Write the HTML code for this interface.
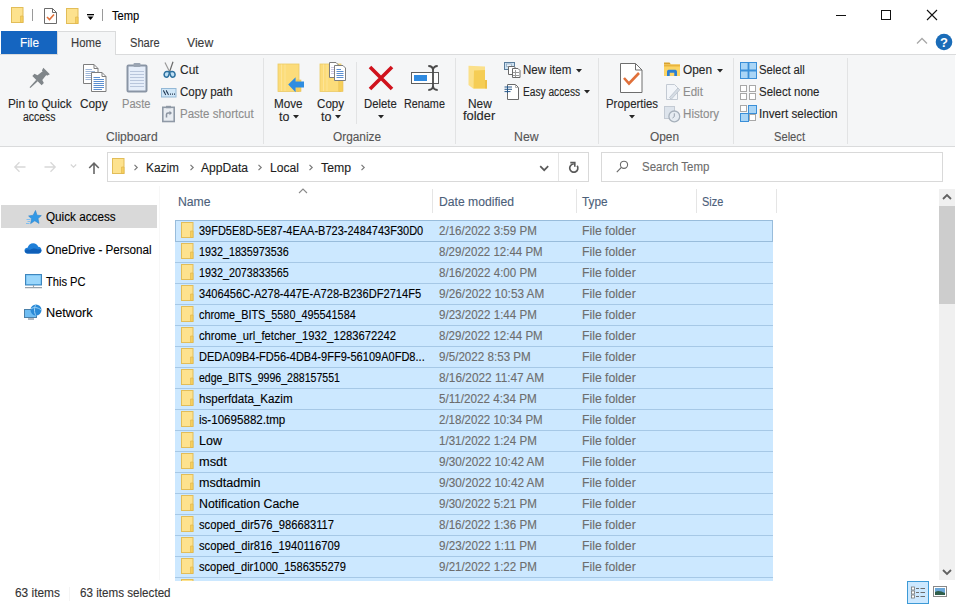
<!DOCTYPE html><html><head><meta charset="utf-8"><style>
*{margin:0;padding:0;box-sizing:border-box}
html,body{width:956px;height:605px;overflow:hidden;background:#fff;font-family:"Liberation Sans", sans-serif;}
.t{position:absolute;white-space:nowrap;line-height:normal;-webkit-text-stroke:0.12px currentColor;}
.a{position:absolute}
</style></head><body>
<svg style="position:absolute;left:11px;top:7px" width="14" height="17" viewBox="0 0 14 17"><rect x="0.5" y="0.5" width="11.5" height="15" fill="#fde28e" stroke="#e2bd58"/><path d="M9.6 9 H12 V15.5 H9.6 Z" fill="#f8d360" stroke="#dfb44c" stroke-width="0.7"/></svg>
<div class="a" style="left:32px;top:9px;width:1px;height:12px;background:#9a9a9a"></div>
<svg class="a" style="left:44px;top:8px" width="13" height="16" viewBox="0 0 13 16"><path d="M0.5 0.5 H8.5 L12.5 4.5 V15.5 H0.5 Z" fill="#fff" stroke="#6b6b6b"/><path d="M8.5 0.5 V4.5 H12.5" fill="none" stroke="#6b6b6b"/><path d="M3 9 L5.5 11.5 L10 6.5" fill="none" stroke="#e0703a" stroke-width="1.6"/></svg>
<svg style="position:absolute;left:66px;top:8px" width="14" height="17" viewBox="0 0 14 17"><rect x="0.5" y="0.5" width="11.5" height="15" fill="#fde28e" stroke="#e2bd58"/><path d="M9.6 9 H12 V15.5 H9.6 Z" fill="#f8d360" stroke="#dfb44c" stroke-width="0.7"/></svg>
<svg class="a" style="left:86px;top:13px" width="9" height="8" viewBox="0 0 9 8"><rect x="1" y="1" width="7" height="1.3" fill="#000"/><path d="M1.5 3.5 H7.5 L4.5 7 Z" fill="#000"/></svg>
<div class="a" style="left:102px;top:9px;width:1px;height:12px;background:#9a9a9a"></div>
<div class="a" style="left:836px;top:15px;width:10px;height:1px;background:#111"></div>
<div class="a" style="left:881px;top:10px;width:10px;height:10px;border:1px solid #111"></div>
<svg class="a" style="left:926px;top:9px" width="12" height="12" viewBox="0 0 12 12"><path d="M1 1 L11 11 M11 1 L1 11" stroke="#111" stroke-width="1.1"/></svg>
<div class="a" style="left:1px;top:31px;width:56px;height:23px;background:#1565c0"></div>
<div class="a" style="left:0;top:54px;width:956px;height:1px;background:#dadbdc"></div>
<div class="a" style="left:57px;top:31px;width:59px;height:24px;background:#f5f6f7;border:1px solid #dadbdc;border-bottom:none"></div>
<div class="a" style="left:0;top:55px;width:955px;height:91px;background:#f5f6f7"></div>
<div class="a" style="left:0;top:146px;width:955px;height:1px;background:#dadbdc"></div>
<div class="a" style="left:263px;top:58px;width:1px;height:86px;background:#e2e3e4"></div>
<div class="a" style="left:455px;top:58px;width:1px;height:86px;background:#e2e3e4"></div>
<div class="a" style="left:598px;top:58px;width:1px;height:86px;background:#e2e3e4"></div>
<div class="a" style="left:733px;top:58px;width:1px;height:86px;background:#e2e3e4"></div>
<div class="a" style="left:847px;top:58px;width:1px;height:86px;background:#e2e3e4"></div>
<div class="a" style="left:356px;top:62px;width:1px;height:62px;background:#e2e3e4"></div>
<svg class="a" style="left:915px;top:36px" width="14" height="10" viewBox="0 0 14 10"><path d="M2 7.5 L7 2.5 L12 7.5" fill="none" stroke="#a8a8a8" stroke-width="1.3"/></svg>
<svg class="a" style="left:935px;top:33px" width="18" height="18" viewBox="0 0 18 18"><circle cx="9" cy="9" r="8.3" fill="#1a6cb8"/><text x="9" y="14" text-anchor="middle" font-family="Liberation Sans" font-weight="bold" font-size="13" fill="#fff">?</text></svg>
<svg class="a" style="left:28px;top:66px" width="24" height="24" viewBox="0 0 24 24"><g transform="translate(18.6,5) rotate(45)" fill="#80868a"><path d="M-4.6 0 H4.6 L3.6 3 H2.6 L3.4 9.5 L6.6 10.5 V13.6 H-6.6 V10.5 L-3.4 9.5 L-2.6 3 H-3.6 Z"/><path d="M-1 13.5 H1 L0.6 23.5 H-0.6 Z"/></g></svg>
<svg class="a" style="left:83px;top:64px" width="25" height="29" viewBox="0 0 25 29"><path d="M0.5 0.5 H11 L15 4.5 V19.5 H0.5 Z" fill="#fff" stroke="#7e7e7e"/><path d="M11 0.5 V4.5 H15" fill="none" stroke="#7e7e7e"/><g stroke="#9fb7d8"><path d="M2.5 5.5 H9 M2.5 7.5 H12 M2.5 9.5 H12 M2.5 11.5 H12 M2.5 13.5 H12 M2.5 15.5 H10"/></g><path d="M8.5 8.5 H19 L23 12.5 V27.5 H8.5 Z" fill="#fff" stroke="#7e7e7e"/><path d="M19 8.5 V12.5 H23" fill="none" stroke="#7e7e7e"/><g stroke="#5b8fd0" stroke-width="1"><path d="M10.5 13.5 H17 M10.5 15.5 H21 M10.5 17.5 H21 M10.5 19.5 H21 M10.5 21.5 H21 M10.5 23.5 H21 M10.5 25.5 H19"/></g></svg>
<svg class="a" style="left:126px;top:62px" width="22" height="31" viewBox="0 0 22 31"><rect x="1.5" y="3.5" width="19" height="26" rx="1" fill="#e6eefa" stroke="#8a95a5" stroke-width="2"/><rect x="7.5" y="1" width="7" height="4" rx="1" fill="#9aa4b2"/><g stroke="#b9c6dc"><path d="M4 9.5 H18 M4 12.5 H18 M4 15.5 H18 M4 18.5 H18 M4 21.5 H18 M4 24.5 H18"/></g></svg>
<svg class="a" style="left:162px;top:60px" width="15" height="19" viewBox="0 0 15 19"><path d="M3 2.5 L7.6 11.8" stroke="#9a9a9a" stroke-width="1.2"/><path d="M11 1.8 L7.6 11.8" stroke="#6a6a6a" stroke-width="1.2"/><path d="M7.5 12.3 C6 11 3.5 11 2.5 13 C1.5 15 2.5 17.2 4.5 17.2 C6 17.2 7 15.5 7.5 12.3 Z" fill="#bfe0f5" stroke="#2b6f9e" stroke-width="1.5"/><path d="M7.7 12.3 C9.2 11 11.7 11 12.7 13 C13.7 15 12.7 17.2 10.7 17.2 C9.2 17.2 8.2 15.5 7.7 12.3 Z" fill="#bfe0f5" stroke="#2b6f9e" stroke-width="1.5"/></svg>
<svg class="a" style="left:161px;top:88px" width="16" height="10" viewBox="0 0 16 10"><rect x="0.5" y="0.5" width="14.5" height="8.5" fill="#cfe6f7" stroke="#93b8d6"/><path d="M2.2 2.5 C3 3 3 4 3.5 4.5 C4 5 4 6 4.8 6.8 M5 2.5 C5.8 3 5.8 4 6.3 4.5 C6.8 5 6.8 6 7.6 6.8" fill="none" stroke="#1f3550" stroke-width="1.1"/><path d="M9 6.2 H10 M11 6.2 H12 M13 6.2 H14" stroke="#1f3550" stroke-width="1.2"/></svg>
<svg class="a" style="left:161px;top:105px" width="15" height="18" viewBox="0 0 15 18"><rect x="1.8" y="2.3" width="11.4" height="14.2" fill="#e9edf2" stroke="#8f99a6" stroke-width="1.6"/><rect x="5" y="0.8" width="5" height="2.4" fill="#8f99a6"/><path d="M5.5 12.5 V9.5 C5.5 8.5 6.2 8 7.2 8 H9.5" fill="none" stroke="#8a93a0" stroke-width="1.5"/><path d="M8.5 5.8 L11 8 L8.5 10.2 Z" fill="#8a93a0"/></svg>
<svg class="a" style="left:277px;top:63px" width="28" height="31" viewBox="0 0 28 31"><rect x="1" y="1" width="21" height="27.5" fill="#fcdc7a" stroke="#ecca66" stroke-width="0.8"/><path d="M4.5 1.5 V28 M8 1.5 V28" stroke="#fde69e" stroke-width="0.8"/><rect x="19.8" y="17" width="4.2" height="11.5" fill="#f6cf5a" stroke="#e9c058" stroke-width="0.6"/><path d="M11.2 21.5 L18.6 14.2 V18.6 H27 V24.6 H18.6 V29.2 Z" fill="#2f8de0"/></svg>
<svg class="a" style="left:319px;top:61px" width="28" height="33" viewBox="0 0 28 33"><rect x="1" y="3" width="21" height="27.5" fill="#fcdc7a" stroke="#ecca66" stroke-width="0.8"/><path d="M4.5 3.5 V30 M8 3.5 V30" stroke="#fde69e" stroke-width="0.8"/><rect x="19.8" y="19" width="4.2" height="11.5" fill="#f6cf5a" stroke="#e9c058" stroke-width="0.6"/><path d="M10.5 1.5 H17 L19.5 4 V16.5 H10.5 Z" fill="#fff" stroke="#7e7e7e"/><path d="M12 6.5 H17 M12 8.5 H18 M12 10.5 H18 M12 12.5 H18" stroke="#b7b0d8" stroke-width="0.7"/><path d="M15.5 4.5 H24 L26.5 7 V19.5 H15.5 Z" fill="#fff" stroke="#7e7e7e"/><g stroke="#5b8fd0"><path d="M17.5 8.5 H22 M17.5 10.5 H24.5 M17.5 12.5 H24.5 M17.5 14.5 H24.5 M17.5 16.5 H24.5"/></g></svg>
<svg class="a" style="left:367px;top:64px" width="28" height="28" viewBox="0 0 28 28"><path d="M3 3 L25 25 M25 3 L3 25" stroke="#d0121d" stroke-width="3.6"/></svg>
<svg class="a" style="left:410px;top:64px" width="30" height="28" viewBox="0 0 30 28"><rect x="1.5" y="8.5" width="27" height="11" fill="#fff" stroke="#5e5e5e"/><rect x="4" y="11" width="13" height="6" fill="#2f8ae0"/><path d="M18.3 2 C21 2 23 3 23 6.5 C23 3 25 2 27.7 2 M23 6.5 V21.5 M18.3 26 C21 26 23 25 23 21.5 C23 25 25 26 27.7 26" fill="none" stroke="#4a4a4a" stroke-width="1.8"/></svg>
<svg class="a" style="left:462px;top:60px" width="28" height="32" viewBox="0 0 28 32"><path d="M6.5 5.7 L23 6.5 V20 H25 V28.6 H11 L6.5 25 Z" fill="#fbe08a"/><path d="M12 10.5 L23 10 V28.6 H11.5 Z" fill="#f5cd55"/><rect x="23" y="20" width="2" height="8.6" fill="#eec047"/></svg>
<svg class="a" style="left:503px;top:61px" width="18" height="18" viewBox="0 0 18 18"><rect x="1.5" y="1.5" width="10" height="7" fill="#cfe3f2" stroke="#5a7d9c"/><rect x="3.5" y="3" width="5" height="2.5" fill="#eef5fb" stroke="#7a98b4" stroke-width="0.6"/><path d="M5.5 5.5 H11 L13 7.5 V13.5 H5.5 Z" fill="#fff" stroke="#6a6a6a"/><path d="M9.5 7.5 H15 L17 9.5 V16.5 H9.5 Z" fill="#fff" stroke="#6a6a6a"/><path d="M10 11.5 H16 M10 14.5 H16 M12.5 9 V16" stroke="#9a9a9a" stroke-width="1"/></svg>
<svg class="a" style="left:503px;top:83px" width="17" height="17" viewBox="0 0 17 17"><path d="M4.5 1.5 H12.5 L15.5 4.5 V16.5 H4.5 Z" fill="#fff" stroke="#6a6a6a"/><path d="M12.5 1.5 V4.5 H15.5" fill="none" stroke="#9a9a9a" stroke-width="0.8"/><path d="M1.5 4 H9 M1.5 6.3 H9 M1.5 8.6 H7.5 M4.5 3 V10" stroke="#2a5a8a" stroke-width="1"/></svg>
<svg class="a" style="left:620px;top:63px" width="23" height="30" viewBox="0 0 23 30"><path d="M0.5 0.5 H15.5 L22 7 V29.5 H0.5 Z" fill="#fff" stroke="#6e6e6e"/><path d="M15.5 0.5 V7 H22" fill="none" stroke="#6e6e6e"/><path d="M4 15 L9 20.5 L19 10" fill="none" stroke="#e0703a" stroke-width="2.6"/></svg>
<svg class="a" style="left:663px;top:62px" width="18" height="15" viewBox="0 0 18 15"><path d="M1 0.5 H6.5 L8 2.5 H1 Z" fill="#d9a22c"/><rect x="1" y="2.5" width="16" height="11.5" fill="#fcd463"/><rect x="1" y="2.5" width="16" height="2" fill="#e9b43e"/><path d="M4 14 V9.8 C4 8.3 5 7.8 6.5 7.8 H11.5 C13 7.8 14 8.3 14 9.8 V14 H11.3 V10.8 H6.7 V14 Z" fill="#2d7fd2"/></svg>
<svg class="a" style="left:665px;top:83px" width="16" height="18" viewBox="0 0 16 18"><path d="M1.5 1.5 H9.5 L12.5 4.5 V16.5 H1.5 Z" fill="#f2f5f9" stroke="#c3cad3"/><path d="M4.5 14.5 L13 5 L14.8 6.8 L6.3 16.3 Z" fill="#d5dce4" stroke="#b9c2cc" stroke-width="0.8"/></svg>
<svg class="a" style="left:663px;top:105px" width="18" height="18" viewBox="0 0 18 18"><rect x="1.5" y="1.5" width="10" height="12" fill="#dde4ec" stroke="#c3cad3"/><circle cx="11.3" cy="11.4" r="5.4" fill="#e6ecf2" stroke="#a6b0bb" stroke-width="1.3"/><path d="M11.3 8.3 V11.6 L9.5 13" stroke="#98a2ad" stroke-width="1" fill="none"/></svg>
<svg class="a" style="left:740px;top:62px" width="17" height="17" viewBox="0 0 17 17"><rect x="0.5" y="0.5" width="16" height="16" fill="#a9d5f6" stroke="#3a8fd8"/><path d="M8.5 0.5 V16.5 M0.5 8.5 H16.5" stroke="#3a8fd8" stroke-width="1.8"/></svg>
<svg class="a" style="left:740px;top:85px" width="17" height="16" viewBox="0 0 17 16"><g fill="#fff" stroke="#a8a8a8"><rect x="0.5" y="0.5" width="6" height="6"/><rect x="9.5" y="0.5" width="6" height="6"/><rect x="0.5" y="8.5" width="6" height="6"/><rect x="9.5" y="8.5" width="6" height="6"/></g></svg>
<svg class="a" style="left:740px;top:105px" width="17" height="17" viewBox="0 0 17 17"><g fill="#fff" stroke="#a8a8a8"><rect x="0.5" y="0.5" width="6" height="6"/><rect x="9.5" y="9.5" width="6" height="6"/></g><g fill="#a9d5f6" stroke="#3a8fd8"><rect x="8.5" y="0.5" width="8" height="8"/><rect x="0.5" y="8.5" width="8" height="8"/></g></svg>
<svg class="a" style="left:292.5px;top:115px" width="6" height="4" viewBox="0 0 6 4"><path d="M0 0 H6 L3 3.6 Z" fill="#262626"/></svg>
<svg class="a" style="left:335px;top:115px" width="6" height="4" viewBox="0 0 6 4"><path d="M0 0 H6 L3 3.6 Z" fill="#262626"/></svg>
<svg class="a" style="left:377.8px;top:115px" width="6" height="4" viewBox="0 0 6 4"><path d="M0 0 H6 L3 3.6 Z" fill="#262626"/></svg>
<svg class="a" style="left:575.5px;top:68.5px" width="6" height="4" viewBox="0 0 6 4"><path d="M0 0 H6 L3 3.6 Z" fill="#262626"/></svg>
<svg class="a" style="left:583.8px;top:89.5px" width="6" height="4" viewBox="0 0 6 4"><path d="M0 0 H6 L3 3.6 Z" fill="#262626"/></svg>
<svg class="a" style="left:628.8px;top:114.8px" width="6" height="4" viewBox="0 0 6 4"><path d="M0 0 H6 L3 3.6 Z" fill="#262626"/></svg>
<svg class="a" style="left:716.8px;top:68.5px" width="6" height="4" viewBox="0 0 6 4"><path d="M0 0 H6 L3 3.6 Z" fill="#262626"/></svg>
<div class="a" style="left:107px;top:152px;width:482px;height:30px;border:1px solid #d9d9d9;background:#fff"></div>
<div class="a" style="left:558px;top:153px;width:1px;height:28px;background:#e5e5e5"></div>
<div class="a" style="left:601px;top:152px;width:342px;height:30px;border:1px solid #d9d9d9;background:#fff"></div>
<svg style="position:absolute;left:112px;top:158px" width="14" height="17" viewBox="0 0 14 17"><rect x="0.5" y="0.5" width="11.5" height="15" fill="#fde28e" stroke="#e2bd58"/><path d="M9.6 9 H12 V15.5 H9.6 Z" fill="#f8d360" stroke="#dfb44c" stroke-width="0.7"/></svg>
<svg class="a" style="left:133px;top:163px" width="6" height="9" viewBox="0 0 6 9"><path d="M1.5 1.8 L4.2 4.5 L1.5 7.2" fill="none" stroke="#7a7a7a" stroke-width="1.2"/></svg>
<svg class="a" style="left:189px;top:163px" width="6" height="9" viewBox="0 0 6 9"><path d="M1.5 1.8 L4.2 4.5 L1.5 7.2" fill="none" stroke="#7a7a7a" stroke-width="1.2"/></svg>
<svg class="a" style="left:257px;top:163px" width="6" height="9" viewBox="0 0 6 9"><path d="M1.5 1.8 L4.2 4.5 L1.5 7.2" fill="none" stroke="#7a7a7a" stroke-width="1.2"/></svg>
<svg class="a" style="left:308px;top:163px" width="6" height="9" viewBox="0 0 6 9"><path d="M1.5 1.8 L4.2 4.5 L1.5 7.2" fill="none" stroke="#7a7a7a" stroke-width="1.2"/></svg>
<svg class="a" style="left:360px;top:163px" width="6" height="9" viewBox="0 0 6 9"><path d="M1.5 1.8 L4.2 4.5 L1.5 7.2" fill="none" stroke="#7a7a7a" stroke-width="1.2"/></svg>
<svg class="a" style="left:539px;top:165px" width="11" height="7" viewBox="0 0 11 7"><path d="M1.2 1.2 L5.2 5.2 L9.2 1.2" fill="none" stroke="#5a5a5a" stroke-width="1.7"/></svg>
<svg class="a" style="left:566px;top:159px" width="16" height="15" viewBox="0 0 16 15"><path d="M7.8 5 A4.1 4.1 0 1 0 11.16 6.75" fill="none" stroke="#5a5a5a" stroke-width="1.7"/><path d="M4.3 3.6 H8.8 V7.8" fill="none" stroke="#5a5a5a" stroke-width="1.6"/></svg>
<svg class="a" style="left:614px;top:158px" width="15" height="16" viewBox="0 0 15 16"><circle cx="10" cy="6.8" r="3.6" fill="none" stroke="#6a6a6a" stroke-width="1.1"/><path d="M7.4 9.4 L2.8 14.2" stroke="#6a6a6a" stroke-width="1.2"/></svg>
<svg class="a" style="left:13px;top:161px" width="14" height="12" viewBox="0 0 14 12"><path d="M1.8 6 H12.5 M6.5 1.3 L1.8 6 L6.5 10.7" fill="none" stroke="#d8d8d8" stroke-width="1.3"/></svg>
<svg class="a" style="left:43px;top:161px" width="14" height="12" viewBox="0 0 14 12"><path d="M1.5 6 H12.2 M7.5 1.3 L12.2 6 L7.5 10.7" fill="none" stroke="#d8d8d8" stroke-width="1.3"/></svg>
<svg class="a" style="left:69px;top:163px" width="9" height="6" viewBox="0 0 9 6"><path d="M1.8 1.5 L4.5 4.2 L7.2 1.5" fill="none" stroke="#d5d5d5" stroke-width="1.1"/></svg>
<svg class="a" style="left:87px;top:161px" width="14" height="14" viewBox="0 0 14 14"><path d="M7 13 V2.5 M2.2 7 L7 2.2 L11.8 7" fill="none" stroke="#666" stroke-width="1.6"/></svg>
<div class="a" style="left:1px;top:205px;width:156px;height:23px;background:#d9d9d9"></div>
<div class="a" style="left:159px;top:186px;width:1px;height:394px;background:#f7f7f7"></div>
<svg class="a" style="left:25px;top:209px" width="17" height="16" viewBox="0 0 17 16"><path d="M10.5 1.5 L12 6.2 L16.3 6.6 L13 9.6 L14 14.4 L9.8 11.8 L5.6 14.6 L6.6 9.8 L3.6 7 L8.2 6.2 Z" fill="#3399e6" stroke="#2a86d0" stroke-width="0.6"/><path d="M1.5 10.5 H5.5 M2.5 12.5 H5 M1 14.5 H4.5" stroke="#7fbef0" stroke-width="1"/></svg>
<svg class="a" style="left:24px;top:242px" width="18" height="12" viewBox="0 0 18 12"><path d="M3.5 11.5 C1.5 11.5 0.5 10 0.5 8.5 C0.5 6.8 2 5.6 3.6 5.8 C4.3 3.2 6.4 1.2 9.2 1.2 C11.6 1.2 13.4 2.6 14.2 4.8 C16.3 4.8 17.5 6.5 17.5 8.2 C17.5 10 16.2 11.5 14.3 11.5 Z" fill="#1f7fd8"/><path d="M0.8 9 C2 7.5 4 7.2 6 8 C8 6.5 11 6 14 7.5 C15.5 7 17 7.5 17.5 8.5 C17.3 10.3 16 11.5 14.3 11.5 H3.5 C2 11.5 1 10.5 0.8 9 Z" fill="#0f5fb8"/></svg>
<svg class="a" style="left:24px;top:273px" width="18" height="16" viewBox="0 0 18 16"><rect x="1.5" y="1.5" width="16" height="10.5" fill="#66baf0" stroke="#3f86bd" stroke-width="1"/><rect x="2.5" y="2.5" width="14" height="8.5" fill="#9ad6fb"/><path d="M9.5 12 V14 M1 14.6 H18" stroke="#9aa3ab" stroke-width="1.1"/></svg>
<svg class="a" style="left:24px;top:304px" width="18" height="16" viewBox="0 0 18 16"><rect x="0.5" y="5.5" width="12" height="8" fill="#6fbdf2" stroke="#4a7fa8"/><path d="M4 15 H10" stroke="#7c8a97" stroke-width="1.2"/><circle cx="12" cy="6" r="5.5" fill="#2b8ad6"/><path d="M7 5 C9 3 14 3 17 6 M12 0.5 C10 3 10 9 12 11.5" fill="none" stroke="#9ed3f7" stroke-width="1"/></svg>
<div class="a" style="left:432px;top:189px;width:1px;height:24px;background:#e5e5e5"></div>
<div class="a" style="left:576px;top:189px;width:1px;height:24px;background:#e5e5e5"></div>
<div class="a" style="left:696px;top:189px;width:1px;height:24px;background:#e5e5e5"></div>
<div class="a" style="left:776px;top:189px;width:1px;height:24px;background:#e5e5e5"></div>
<svg class="a" style="left:298px;top:188px" width="10" height="6" viewBox="0 0 10 6"><path d="M1 5 L5 1 L9 5" fill="none" stroke="#8a8a8a" stroke-width="1.1"/></svg>
<div class="a" style="left:175px;top:220px;width:598px;height:21px;background:#cce8ff;border-top:1px solid #a6c8e6"></div>
<div class="a" style="left:175px;top:241px;width:598px;height:21px;background:#cce8ff;border-top:1px solid #a6c8e6"></div>
<div class="a" style="left:175px;top:262px;width:598px;height:21px;background:#cce8ff;border-top:1px solid #a6c8e6"></div>
<div class="a" style="left:175px;top:283px;width:598px;height:21px;background:#cce8ff;border-top:1px solid #a6c8e6"></div>
<div class="a" style="left:175px;top:304px;width:598px;height:21px;background:#cce8ff;border-top:1px solid #a6c8e6"></div>
<div class="a" style="left:175px;top:325px;width:598px;height:21px;background:#cce8ff;border-top:1px solid #a6c8e6"></div>
<div class="a" style="left:175px;top:346px;width:598px;height:21px;background:#cce8ff;border-top:1px solid #a6c8e6"></div>
<div class="a" style="left:175px;top:367px;width:598px;height:21px;background:#cce8ff;border-top:1px solid #a6c8e6"></div>
<div class="a" style="left:175px;top:388px;width:598px;height:21px;background:#cce8ff;border-top:1px solid #a6c8e6"></div>
<div class="a" style="left:175px;top:409px;width:598px;height:21px;background:#cce8ff;border-top:1px solid #a6c8e6"></div>
<div class="a" style="left:175px;top:430px;width:598px;height:21px;background:#cce8ff;border-top:1px solid #a6c8e6"></div>
<div class="a" style="left:175px;top:451px;width:598px;height:21px;background:#cce8ff;border-top:1px solid #a6c8e6"></div>
<div class="a" style="left:175px;top:472px;width:598px;height:21px;background:#cce8ff;border-top:1px solid #a6c8e6"></div>
<div class="a" style="left:175px;top:493px;width:598px;height:21px;background:#cce8ff;border-top:1px solid #a6c8e6"></div>
<div class="a" style="left:175px;top:514px;width:598px;height:21px;background:#cce8ff;border-top:1px solid #a6c8e6"></div>
<div class="a" style="left:175px;top:535px;width:598px;height:21px;background:#cce8ff;border-top:1px solid #a6c8e6"></div>
<div class="a" style="left:175px;top:556px;width:598px;height:21px;background:#cce8ff;border-top:1px solid #a6c8e6"></div>
<div class="a" style="left:175px;top:577px;width:598px;height:4px;background:#cce8ff;border-top:1px solid #a6c8e6"></div>
<div class="a" style="left:175px;top:220px;width:598px;height:22px;border:1px solid #98bcdb"></div>
<div class="a" style="left:0;top:0;width:956px;height:581px;overflow:hidden;pointer-events:none"><svg style="position:absolute;left:181px;top:222px" width="14" height="17" viewBox="0 0 14 17"><rect x="0.5" y="0.5" width="11.5" height="15" fill="#fde28e" stroke="#e2bd58"/><path d="M9.6 9 H12 V15.5 H9.6 Z" fill="#f8d360" stroke="#dfb44c" stroke-width="0.7"/></svg></div>
<div class="a" style="left:0;top:0;width:956px;height:581px;overflow:hidden;pointer-events:none"><svg style="position:absolute;left:181px;top:243px" width="14" height="17" viewBox="0 0 14 17"><rect x="0.5" y="0.5" width="11.5" height="15" fill="#fde28e" stroke="#e2bd58"/><path d="M9.6 9 H12 V15.5 H9.6 Z" fill="#f8d360" stroke="#dfb44c" stroke-width="0.7"/></svg></div>
<div class="a" style="left:0;top:0;width:956px;height:581px;overflow:hidden;pointer-events:none"><svg style="position:absolute;left:181px;top:264px" width="14" height="17" viewBox="0 0 14 17"><rect x="0.5" y="0.5" width="11.5" height="15" fill="#fde28e" stroke="#e2bd58"/><path d="M9.6 9 H12 V15.5 H9.6 Z" fill="#f8d360" stroke="#dfb44c" stroke-width="0.7"/></svg></div>
<div class="a" style="left:0;top:0;width:956px;height:581px;overflow:hidden;pointer-events:none"><svg style="position:absolute;left:181px;top:285px" width="14" height="17" viewBox="0 0 14 17"><rect x="0.5" y="0.5" width="11.5" height="15" fill="#fde28e" stroke="#e2bd58"/><path d="M9.6 9 H12 V15.5 H9.6 Z" fill="#f8d360" stroke="#dfb44c" stroke-width="0.7"/></svg></div>
<div class="a" style="left:0;top:0;width:956px;height:581px;overflow:hidden;pointer-events:none"><svg style="position:absolute;left:181px;top:306px" width="14" height="17" viewBox="0 0 14 17"><rect x="0.5" y="0.5" width="11.5" height="15" fill="#fde28e" stroke="#e2bd58"/><path d="M9.6 9 H12 V15.5 H9.6 Z" fill="#f8d360" stroke="#dfb44c" stroke-width="0.7"/></svg></div>
<div class="a" style="left:0;top:0;width:956px;height:581px;overflow:hidden;pointer-events:none"><svg style="position:absolute;left:181px;top:327px" width="14" height="17" viewBox="0 0 14 17"><rect x="0.5" y="0.5" width="11.5" height="15" fill="#fde28e" stroke="#e2bd58"/><path d="M9.6 9 H12 V15.5 H9.6 Z" fill="#f8d360" stroke="#dfb44c" stroke-width="0.7"/></svg></div>
<div class="a" style="left:0;top:0;width:956px;height:581px;overflow:hidden;pointer-events:none"><svg style="position:absolute;left:181px;top:348px" width="14" height="17" viewBox="0 0 14 17"><rect x="0.5" y="0.5" width="11.5" height="15" fill="#fde28e" stroke="#e2bd58"/><path d="M9.6 9 H12 V15.5 H9.6 Z" fill="#f8d360" stroke="#dfb44c" stroke-width="0.7"/></svg></div>
<div class="a" style="left:0;top:0;width:956px;height:581px;overflow:hidden;pointer-events:none"><svg style="position:absolute;left:181px;top:369px" width="14" height="17" viewBox="0 0 14 17"><rect x="0.5" y="0.5" width="11.5" height="15" fill="#fde28e" stroke="#e2bd58"/><path d="M9.6 9 H12 V15.5 H9.6 Z" fill="#f8d360" stroke="#dfb44c" stroke-width="0.7"/></svg></div>
<div class="a" style="left:0;top:0;width:956px;height:581px;overflow:hidden;pointer-events:none"><svg style="position:absolute;left:181px;top:390px" width="14" height="17" viewBox="0 0 14 17"><rect x="0.5" y="0.5" width="11.5" height="15" fill="#fde28e" stroke="#e2bd58"/><path d="M9.6 9 H12 V15.5 H9.6 Z" fill="#f8d360" stroke="#dfb44c" stroke-width="0.7"/></svg></div>
<div class="a" style="left:0;top:0;width:956px;height:581px;overflow:hidden;pointer-events:none"><svg style="position:absolute;left:181px;top:411px" width="14" height="17" viewBox="0 0 14 17"><rect x="0.5" y="0.5" width="11.5" height="15" fill="#fde28e" stroke="#e2bd58"/><path d="M9.6 9 H12 V15.5 H9.6 Z" fill="#f8d360" stroke="#dfb44c" stroke-width="0.7"/></svg></div>
<div class="a" style="left:0;top:0;width:956px;height:581px;overflow:hidden;pointer-events:none"><svg style="position:absolute;left:181px;top:432px" width="14" height="17" viewBox="0 0 14 17"><rect x="0.5" y="0.5" width="11.5" height="15" fill="#fde28e" stroke="#e2bd58"/><path d="M9.6 9 H12 V15.5 H9.6 Z" fill="#f8d360" stroke="#dfb44c" stroke-width="0.7"/></svg></div>
<div class="a" style="left:0;top:0;width:956px;height:581px;overflow:hidden;pointer-events:none"><svg style="position:absolute;left:181px;top:453px" width="14" height="17" viewBox="0 0 14 17"><rect x="0.5" y="0.5" width="11.5" height="15" fill="#fde28e" stroke="#e2bd58"/><path d="M9.6 9 H12 V15.5 H9.6 Z" fill="#f8d360" stroke="#dfb44c" stroke-width="0.7"/></svg></div>
<div class="a" style="left:0;top:0;width:956px;height:581px;overflow:hidden;pointer-events:none"><svg style="position:absolute;left:181px;top:474px" width="14" height="17" viewBox="0 0 14 17"><rect x="0.5" y="0.5" width="11.5" height="15" fill="#fde28e" stroke="#e2bd58"/><path d="M9.6 9 H12 V15.5 H9.6 Z" fill="#f8d360" stroke="#dfb44c" stroke-width="0.7"/></svg></div>
<div class="a" style="left:0;top:0;width:956px;height:581px;overflow:hidden;pointer-events:none"><svg style="position:absolute;left:181px;top:495px" width="14" height="17" viewBox="0 0 14 17"><rect x="0.5" y="0.5" width="11.5" height="15" fill="#fde28e" stroke="#e2bd58"/><path d="M9.6 9 H12 V15.5 H9.6 Z" fill="#f8d360" stroke="#dfb44c" stroke-width="0.7"/></svg></div>
<div class="a" style="left:0;top:0;width:956px;height:581px;overflow:hidden;pointer-events:none"><svg style="position:absolute;left:181px;top:516px" width="14" height="17" viewBox="0 0 14 17"><rect x="0.5" y="0.5" width="11.5" height="15" fill="#fde28e" stroke="#e2bd58"/><path d="M9.6 9 H12 V15.5 H9.6 Z" fill="#f8d360" stroke="#dfb44c" stroke-width="0.7"/></svg></div>
<div class="a" style="left:0;top:0;width:956px;height:581px;overflow:hidden;pointer-events:none"><svg style="position:absolute;left:181px;top:537px" width="14" height="17" viewBox="0 0 14 17"><rect x="0.5" y="0.5" width="11.5" height="15" fill="#fde28e" stroke="#e2bd58"/><path d="M9.6 9 H12 V15.5 H9.6 Z" fill="#f8d360" stroke="#dfb44c" stroke-width="0.7"/></svg></div>
<div class="a" style="left:0;top:0;width:956px;height:581px;overflow:hidden;pointer-events:none"><svg style="position:absolute;left:181px;top:558px" width="14" height="17" viewBox="0 0 14 17"><rect x="0.5" y="0.5" width="11.5" height="15" fill="#fde28e" stroke="#e2bd58"/><path d="M9.6 9 H12 V15.5 H9.6 Z" fill="#f8d360" stroke="#dfb44c" stroke-width="0.7"/></svg></div>
<div class="a" style="left:0;top:0;width:956px;height:581px;overflow:hidden;pointer-events:none"><svg style="position:absolute;left:181px;top:579px" width="14" height="17" viewBox="0 0 14 17"><rect x="0.5" y="0.5" width="11.5" height="15" fill="#fde28e" stroke="#e2bd58"/><path d="M9.6 9 H12 V15.5 H9.6 Z" fill="#f8d360" stroke="#dfb44c" stroke-width="0.7"/></svg></div>
<div class="a" style="left:939px;top:189px;width:16px;height:391px;background:#f0f0f0"></div>
<div class="a" style="left:939px;top:206px;width:16px;height:98px;background:#cdcdcd"></div>
<svg class="a" style="left:942px;top:193px" width="10" height="7" viewBox="0 0 10 7"><path d="M1 6 L5 2 L9 6" fill="none" stroke="#606060" stroke-width="1.8"/></svg>
<svg class="a" style="left:942px;top:569px" width="10" height="7" viewBox="0 0 10 7"><path d="M1 1 L5 5 L9 1" fill="none" stroke="#606060" stroke-width="1.8"/></svg>
<div class="a" style="left:69px;top:587px;width:1px;height:14px;background:#f4f4f4"></div>
<svg class="a" style="left:907px;top:581px" width="22" height="23" viewBox="0 0 22 23"><rect x="0.5" y="0.5" width="21" height="22" fill="#cce8ff" stroke="#3d9ad6"/><g fill="#fff" stroke="#777" stroke-width="0.8"><rect x="4.5" y="6" width="3" height="3"/><rect x="4.5" y="10" width="3" height="3"/><rect x="4.5" y="14" width="3" height="3"/></g><path d="M9 7.5 H12 M13.5 7.5 H18 M9 11.5 H12 M13.5 11.5 H18 M9 15.5 H12 M13.5 15.5 H18" stroke="#6d6d6d" stroke-width="1.2"/></svg>
<svg class="a" style="left:933px;top:586px" width="14" height="11" viewBox="0 0 14 11"><rect x="0.5" y="0.5" width="13" height="10" fill="#fff" stroke="#888"/><rect x="2" y="2" width="10" height="7" fill="#6aa6d8"/><path d="M2 6 C5 4 8 5 12 7 V9 H2 Z" fill="#2f5e4a"/></svg>
<div class="a" style="left:0;top:0;width:956px;height:580px;overflow:hidden">
<div class="t" style="left:111.60px;top:8.84px;font-size:12px;color:#000;transform:scaleX(0.9269);transform-origin:0 0;">Temp</div>
<div class="t" style="left:19.50px;top:36.04px;font-size:12px;color:#fff;transform:scaleX(0.9874);transform-origin:0 0;">File</div>
<div class="t" style="left:71.10px;top:36.04px;font-size:12px;color:#3a3a3a;transform:scaleX(0.9433);transform-origin:0 0;">Home</div>
<div class="t" style="left:129.60px;top:36.04px;font-size:12px;color:#3a3a3a;transform:scaleX(0.9241);transform-origin:0 0;">Share</div>
<div class="t" style="left:187.20px;top:36.04px;font-size:12px;color:#3a3a3a;transform:scaleX(1.0156);transform-origin:0 0;">View</div>
<div class="t" style="left:8.30px;top:97.04px;font-size:12px;color:#262626;transform:scaleX(0.9830);transform-origin:0 0;">Pin to Quick</div>
<div class="t" style="left:23.40px;top:109.94px;font-size:12px;color:#262626;transform:scaleX(0.8726);transform-origin:0 0;">access</div>
<div class="t" style="left:80.30px;top:97.04px;font-size:12px;color:#262626;transform:scaleX(0.9852);transform-origin:0 0;">Copy</div>
<div class="t" style="left:122.10px;top:97.04px;font-size:12px;color:#8d8d8d;transform:scaleX(0.9255);transform-origin:0 0;">Paste</div>
<div class="t" style="left:179.80px;top:62.94px;font-size:12px;color:#262626;transform:scaleX(0.9953);transform-origin:0 0;">Cut</div>
<div class="t" style="left:180.10px;top:84.94px;font-size:12px;color:#262626;transform:scaleX(0.9616);transform-origin:0 0;">Copy path</div>
<div class="t" style="left:180.10px;top:106.84px;font-size:12px;color:#8d8d8d;transform:scaleX(0.9593);transform-origin:0 0;">Paste shortcut</div>
<div class="t" style="left:105.70px;top:129.64px;font-size:12px;color:#555;transform:scaleX(1.0044);transform-origin:0 0;">Clipboard</div>
<div class="t" style="left:273.50px;top:96.84px;font-size:12px;color:#262626;transform:scaleX(0.9747);transform-origin:0 0;">Move</div>
<div class="t" style="left:278.70px;top:109.64px;font-size:12px;color:#262626;transform:scaleX(1.0384);transform-origin:0 0;">to</div>
<div class="t" style="left:316.80px;top:96.84px;font-size:12px;color:#262626;transform:scaleX(0.9673);transform-origin:0 0;">Copy</div>
<div class="t" style="left:320.50px;top:109.64px;font-size:12px;color:#262626;transform:scaleX(1.0384);transform-origin:0 0;">to</div>
<div class="t" style="left:364.10px;top:96.84px;font-size:12px;color:#262626;transform:scaleX(0.9456);transform-origin:0 0;">Delete</div>
<div class="t" style="left:404.00px;top:96.84px;font-size:12px;color:#262626;transform:scaleX(0.9017);transform-origin:0 0;">Rename</div>
<div class="t" style="left:333.30px;top:129.64px;font-size:12px;color:#555;transform:scaleX(0.9876);transform-origin:0 0;">Organize</div>
<div class="t" style="left:467.90px;top:96.84px;font-size:12px;color:#262626;transform:scaleX(0.9910);transform-origin:0 0;">New</div>
<div class="t" style="left:463.40px;top:109.44px;font-size:12px;color:#262626;transform:scaleX(1.0722);transform-origin:0 0;">folder</div>
<div class="t" style="left:522.90px;top:63.04px;font-size:12px;color:#262626;transform:scaleX(0.9657);transform-origin:0 0;">New item</div>
<div class="t" style="left:523.10px;top:84.54px;font-size:12px;color:#262626;transform:scaleX(0.8477);transform-origin:0 0;">Easy access</div>
<div class="t" style="left:513.50px;top:129.64px;font-size:12px;color:#555;transform:scaleX(1.0243);transform-origin:0 0;">New</div>
<div class="t" style="left:605.80px;top:96.84px;font-size:12px;color:#262626;transform:scaleX(0.9524);transform-origin:0 0;">Properties</div>
<div class="t" style="left:683.00px;top:63.14px;font-size:12px;color:#262626;transform:scaleX(0.9878);transform-origin:0 0;">Open</div>
<div class="t" style="left:683.00px;top:84.84px;font-size:12px;color:#8d8d8d;transform:scaleX(0.9619);transform-origin:0 0;">Edit</div>
<div class="t" style="left:683.10px;top:107.14px;font-size:12px;color:#8d8d8d;transform:scaleX(0.9667);transform-origin:0 0;">History</div>
<div class="t" style="left:649.90px;top:129.64px;font-size:12px;color:#555;transform:scaleX(0.9912);transform-origin:0 0;">Open</div>
<div class="t" style="left:758.70px;top:62.94px;font-size:12px;color:#262626;transform:scaleX(0.9424);transform-origin:0 0;">Select all</div>
<div class="t" style="left:758.70px;top:85.04px;font-size:12px;color:#262626;transform:scaleX(0.9544);transform-origin:0 0;">Select none</div>
<div class="t" style="left:758.70px;top:107.24px;font-size:12px;color:#262626;transform:scaleX(0.9738);transform-origin:0 0;">Invert selection</div>
<div class="t" style="left:773.60px;top:129.94px;font-size:12px;color:#555;transform:scaleX(0.9293);transform-origin:0 0;">Select</div>
<div class="t" style="left:146.10px;top:160.64px;font-size:12px;color:#1e1e1e;transform:scaleX(0.9897);transform-origin:0 0;">Kazim</div>
<div class="t" style="left:201.10px;top:160.64px;font-size:12px;color:#1e1e1e;transform:scaleX(1.0085);transform-origin:0 0;">AppData</div>
<div class="t" style="left:270.10px;top:160.64px;font-size:12px;color:#1e1e1e;transform:scaleX(1.0074);transform-origin:0 0;">Local</div>
<div class="t" style="left:321.10px;top:160.64px;font-size:12px;color:#1e1e1e;transform:scaleX(1.0224);transform-origin:0 0;">Temp</div>
<div class="t" style="left:641.60px;top:160.24px;font-size:12px;color:#6d6d6d;transform:scaleX(0.9562);transform-origin:0 0;">Search Temp</div>
<div class="t" style="left:46.10px;top:210.24px;font-size:12px;color:#000;transform:scaleX(0.9753);transform-origin:0 0;">Quick access</div>
<div class="t" style="left:46.10px;top:242.64px;font-size:12px;color:#000;transform:scaleX(0.9713);transform-origin:0 0;">OneDrive - Personal</div>
<div class="t" style="left:46.10px;top:274.54px;font-size:12px;color:#000;transform:scaleX(0.9277);transform-origin:0 0;">This PC</div>
<div class="t" style="left:46.10px;top:306.44px;font-size:12px;color:#000;transform:scaleX(1.0587);transform-origin:0 0;">Network</div>
<div class="t" style="left:177.80px;top:194.74px;font-size:12px;color:#4c607a;transform:scaleX(1.0183);transform-origin:0 0;">Name</div>
<div class="t" style="left:438.90px;top:194.84px;font-size:12px;color:#4c607a;transform:scaleX(1.0129);transform-origin:0 0;">Date modified</div>
<div class="t" style="left:582.40px;top:194.84px;font-size:12px;color:#4c607a;transform:scaleX(0.9840);transform-origin:0 0;">Type</div>
<div class="t" style="left:702.40px;top:194.84px;font-size:12px;color:#4c607a;transform:scaleX(0.9124);transform-origin:0 0;">Size</div>
<div class="t" style="left:198.60px;top:223.94px;font-size:12px;color:#000;transform:scaleX(0.9157);transform-origin:0 0;">39FD5E8D-5E87-4EAA-B723-2484743F30D0</div>
<div class="t" style="left:438.60px;top:223.94px;font-size:12px;color:#6d6d6d;transform:scaleX(0.9643);transform-origin:0 0;">2/16/2022 3:59 PM</div>
<div class="t" style="left:582.40px;top:223.94px;font-size:12px;color:#6d6d6d;transform:scaleX(1.0192);transform-origin:0 0;">File folder</div>
<div class="t" style="left:198.60px;top:244.94px;font-size:12px;color:#000;transform:scaleX(0.8960);transform-origin:0 0;">1932_1835973536</div>
<div class="t" style="left:438.60px;top:244.94px;font-size:12px;color:#6d6d6d;transform:scaleX(0.9594);transform-origin:0 0;">8/29/2022 12:44 PM</div>
<div class="t" style="left:582.40px;top:244.94px;font-size:12px;color:#6d6d6d;transform:scaleX(1.0192);transform-origin:0 0;">File folder</div>
<div class="t" style="left:198.60px;top:265.94px;font-size:12px;color:#000;transform:scaleX(0.8960);transform-origin:0 0;">1932_2073833565</div>
<div class="t" style="left:438.60px;top:265.94px;font-size:12px;color:#6d6d6d;transform:scaleX(0.9643);transform-origin:0 0;">8/16/2022 4:00 PM</div>
<div class="t" style="left:582.40px;top:265.94px;font-size:12px;color:#6d6d6d;transform:scaleX(1.0192);transform-origin:0 0;">File folder</div>
<div class="t" style="left:198.60px;top:286.94px;font-size:12px;color:#000;transform:scaleX(0.9248);transform-origin:0 0;">3406456C-A278-447E-A728-B236DF2714F5</div>
<div class="t" style="left:438.60px;top:286.94px;font-size:12px;color:#6d6d6d;transform:scaleX(0.9793);transform-origin:0 0;">9/26/2022 10:53 AM</div>
<div class="t" style="left:582.40px;top:286.94px;font-size:12px;color:#6d6d6d;transform:scaleX(1.0192);transform-origin:0 0;">File folder</div>
<div class="t" style="left:198.60px;top:307.94px;font-size:12px;color:#000;transform:scaleX(0.9033);transform-origin:0 0;">chrome_BITS_5580_495541584</div>
<div class="t" style="left:438.60px;top:307.94px;font-size:12px;color:#6d6d6d;transform:scaleX(0.9643);transform-origin:0 0;">9/23/2022 1:44 PM</div>
<div class="t" style="left:582.40px;top:307.94px;font-size:12px;color:#6d6d6d;transform:scaleX(1.0192);transform-origin:0 0;">File folder</div>
<div class="t" style="left:198.60px;top:328.94px;font-size:12px;color:#000;transform:scaleX(0.9369);transform-origin:0 0;">chrome_url_fetcher_1932_1283672242</div>
<div class="t" style="left:438.60px;top:328.94px;font-size:12px;color:#6d6d6d;transform:scaleX(0.9594);transform-origin:0 0;">8/29/2022 12:44 PM</div>
<div class="t" style="left:582.40px;top:328.94px;font-size:12px;color:#6d6d6d;transform:scaleX(1.0192);transform-origin:0 0;">File folder</div>
<div class="t" style="left:198.60px;top:349.94px;font-size:12px;color:#000;transform:scaleX(0.9196);transform-origin:0 0;">DEDA09B4-FD56-4DB4-9FF9-56109A0FD8...</div>
<div class="t" style="left:438.60px;top:349.94px;font-size:12px;color:#6d6d6d;transform:scaleX(0.9690);transform-origin:0 0;">9/5/2022 8:53 PM</div>
<div class="t" style="left:582.40px;top:349.94px;font-size:12px;color:#6d6d6d;transform:scaleX(1.0192);transform-origin:0 0;">File folder</div>
<div class="t" style="left:198.60px;top:370.94px;font-size:12px;color:#000;transform:scaleX(0.8798);transform-origin:0 0;">edge_BITS_9996_288157551</div>
<div class="t" style="left:438.60px;top:370.94px;font-size:12px;color:#6d6d6d;transform:scaleX(0.9866);transform-origin:0 0;">8/16/2022 11:47 AM</div>
<div class="t" style="left:582.40px;top:370.94px;font-size:12px;color:#6d6d6d;transform:scaleX(1.0192);transform-origin:0 0;">File folder</div>
<div class="t" style="left:198.60px;top:391.94px;font-size:12px;color:#000;transform:scaleX(0.9676);transform-origin:0 0;">hsperfdata_Kazim</div>
<div class="t" style="left:438.60px;top:391.94px;font-size:12px;color:#6d6d6d;transform:scaleX(0.9728);transform-origin:0 0;">5/11/2022 4:34 PM</div>
<div class="t" style="left:582.40px;top:391.94px;font-size:12px;color:#6d6d6d;transform:scaleX(1.0192);transform-origin:0 0;">File folder</div>
<div class="t" style="left:198.60px;top:412.94px;font-size:12px;color:#000;transform:scaleX(0.9654);transform-origin:0 0;">is-10695882.tmp</div>
<div class="t" style="left:438.60px;top:412.94px;font-size:12px;color:#6d6d6d;transform:scaleX(0.9594);transform-origin:0 0;">2/18/2022 10:34 PM</div>
<div class="t" style="left:582.40px;top:412.94px;font-size:12px;color:#6d6d6d;transform:scaleX(1.0192);transform-origin:0 0;">File folder</div>
<div class="t" style="left:198.60px;top:433.94px;font-size:12px;color:#000;transform:scaleX(1.0402);transform-origin:0 0;">Low</div>
<div class="t" style="left:438.60px;top:433.94px;font-size:12px;color:#6d6d6d;transform:scaleX(0.9643);transform-origin:0 0;">1/31/2022 1:24 PM</div>
<div class="t" style="left:582.40px;top:433.94px;font-size:12px;color:#6d6d6d;transform:scaleX(1.0192);transform-origin:0 0;">File folder</div>
<div class="t" style="left:198.60px;top:454.94px;font-size:12px;color:#000;transform:scaleX(1.0686);transform-origin:0 0;">msdt</div>
<div class="t" style="left:438.60px;top:454.94px;font-size:12px;color:#6d6d6d;transform:scaleX(0.9793);transform-origin:0 0;">9/30/2022 10:42 AM</div>
<div class="t" style="left:582.40px;top:454.94px;font-size:12px;color:#6d6d6d;transform:scaleX(1.0192);transform-origin:0 0;">File folder</div>
<div class="t" style="left:198.60px;top:475.94px;font-size:12px;color:#000;transform:scaleX(1.0479);transform-origin:0 0;">msdtadmin</div>
<div class="t" style="left:438.60px;top:475.94px;font-size:12px;color:#6d6d6d;transform:scaleX(0.9793);transform-origin:0 0;">9/30/2022 10:42 AM</div>
<div class="t" style="left:582.40px;top:475.94px;font-size:12px;color:#6d6d6d;transform:scaleX(1.0192);transform-origin:0 0;">File folder</div>
<div class="t" style="left:198.60px;top:496.94px;font-size:12px;color:#000;transform:scaleX(1.0288);transform-origin:0 0;">Notification Cache</div>
<div class="t" style="left:438.60px;top:496.94px;font-size:12px;color:#6d6d6d;transform:scaleX(0.9643);transform-origin:0 0;">9/30/2022 5:21 PM</div>
<div class="t" style="left:582.40px;top:496.94px;font-size:12px;color:#6d6d6d;transform:scaleX(1.0192);transform-origin:0 0;">File folder</div>
<div class="t" style="left:198.60px;top:517.94px;font-size:12px;color:#000;transform:scaleX(0.9338);transform-origin:0 0;">scoped_dir576_986683117</div>
<div class="t" style="left:438.60px;top:517.94px;font-size:12px;color:#6d6d6d;transform:scaleX(0.9643);transform-origin:0 0;">8/16/2022 1:36 PM</div>
<div class="t" style="left:582.40px;top:517.94px;font-size:12px;color:#6d6d6d;transform:scaleX(1.0192);transform-origin:0 0;">File folder</div>
<div class="t" style="left:198.60px;top:538.94px;font-size:12px;color:#000;transform:scaleX(0.9316);transform-origin:0 0;">scoped_dir816_1940116709</div>
<div class="t" style="left:438.60px;top:538.94px;font-size:12px;color:#6d6d6d;transform:scaleX(0.9728);transform-origin:0 0;">9/23/2022 1:11 PM</div>
<div class="t" style="left:582.40px;top:538.94px;font-size:12px;color:#6d6d6d;transform:scaleX(1.0192);transform-origin:0 0;">File folder</div>
<div class="t" style="left:198.60px;top:559.94px;font-size:12px;color:#000;transform:scaleX(0.9250);transform-origin:0 0;">scoped_dir1000_1586355279</div>
<div class="t" style="left:438.60px;top:559.94px;font-size:12px;color:#6d6d6d;transform:scaleX(0.9643);transform-origin:0 0;">9/21/2022 1:22 PM</div>
<div class="t" style="left:582.40px;top:559.94px;font-size:12px;color:#6d6d6d;transform:scaleX(1.0192);transform-origin:0 0;">File folder</div>
</div>
<div class="t" style="left:14.80px;top:585.94px;font-size:12px;color:#333;transform:scaleX(0.9899);transform-origin:0 0;">63 items</div>
<div class="t" style="left:79.60px;top:585.94px;font-size:12px;color:#333;transform:scaleX(0.9701);transform-origin:0 0;">63 items selected</div>
</body></html>
